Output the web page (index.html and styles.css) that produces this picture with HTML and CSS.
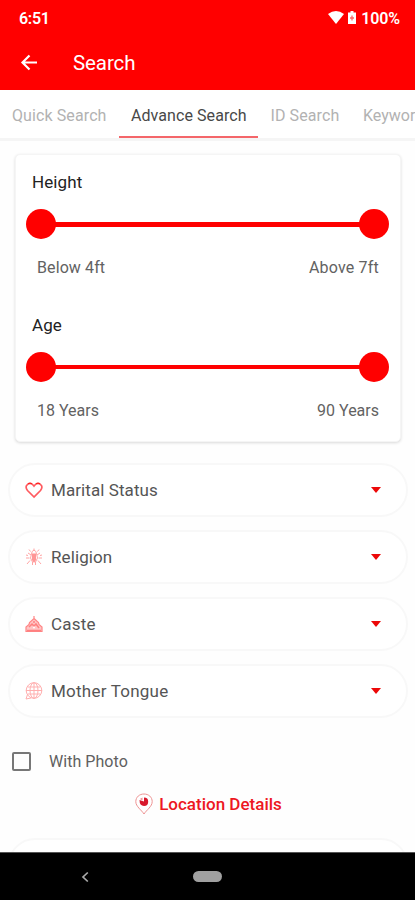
FILE: index.html
```html
<!DOCTYPE html>
<html lang="en">
<head>
<meta charset="utf-8">
<title>Search</title>
<link rel="stylesheet" href="styles.css">
</head>
<body>
<div class="screen">
  <header class="header">
    <div class="status">
      <span class="clock">6:51</span>
      <svg class="wifi" width="16" height="13" viewBox="0 0 16 13"><path d="M0 3Q8-3 16 3L8 13Z" fill="#fff"/></svg>
      <svg class="battery" width="8" height="13" viewBox="0 0 8 13"><path d="M2.5 0h3v1.5H8V13H0V1.5h2.500z" fill="#fff"/><path d="M4 4.500v5M2 7h4" stroke="#f66" stroke-width="1.300"/></svg>
      <span class="percent">100%</span>
    </div>
    <div class="toolbar">
      <svg class="back" width="18" height="18" viewBox="0 0 18 18"><path d="M17 8.500H2.500M9.500 1.500l-7 7 7 7" fill="none" stroke="#fff" stroke-width="2.200"/></svg>
      <h1 class="title">Search</h1>
    </div>
  </header>
  <nav class="tabs">
    <span class="tab tab-quick">Quick Search</span>
    <span class="tab tab-advance active">Advance Search</span>
    <span class="tab tab-id">ID Search</span>
    <span class="tab tab-keyword">Keyword Search</span>
  </nav>
  <main class="content">
    <section class="card">
      <div class="range">
        <h2 class="label">Height</h2>
        <div class="slider"><i class="knob"></i><i class="track"></i><i class="knob"></i></div>
        <div class="limits"><span class="below">Below 4ft</span><span class="above">Above 7ft</span></div>
      </div>
      <div class="range">
        <h2 class="label">Age</h2>
        <div class="slider"><i class="knob"></i><i class="track track-age"></i><i class="knob"></i></div>
        <div class="limits"><span>18 Years</span><span>90 Years</span></div>
      </div>
    </section>
    <div class="fields">
      <div class="field">
        <svg class="icon" width="18" height="18" viewBox="0 0 18 18"><path d="M9 16L2.500 9.500C-.5 6 2 2.500 5 2.500c2 0 3 1 4 2.500 1-1.500 2-2.500 4-2.500 3 0 5.500 3.500 2.500 7z" fill="none" stroke="#ff5a5f" stroke-width="1.700"/><path d="M3 2.800q2-1.500 4 0M11 2.800q2-1.500 4 0" fill="none" stroke="#f22" stroke-width="1.300"/></svg>
        <span class="name marital">Marital Status</span><i class="caret"></i>
      </div>
      <div class="field">
        <svg class="icon" width="18" height="18" viewBox="0 0 18 18"><g fill="none" stroke="#ffa5a5"><path d="M6 7L3 5M12 7l3-2M4.500 10H1M13.500 10H17M5 12.500L2 16M13 12.500l3 3.500M5.500 3.500L4 1.500M12.500 3.500L14 1.500M1 7l2 .5M17 7l-2 .5"/><path d="M6.500 6Q6.500 3 9 2q2.500 1 2.500 4l1 4-2 4v3M6.500 6l-1 4 2 4v3"/></g><path d="M7 5.500h4v6.500l-2 3-2-3z" fill="#ff9696"/><path d="M9 .5V3" stroke="#ffa5a5"/></svg>
        <span class="name religion">Religion</span><i class="caret"></i>
      </div>
      <div class="field">
        <svg class="icon" width="18" height="18" viewBox="0 0 18 18"><path d="M9 1v3M9 3.500l4.500 4 .5 2 3 2.500v4.500H1V12l3-2.500.5-2z" fill="#ffc5c5" stroke="#ff8585" stroke-width="1.200"/><path d="M2 15.500h14M4 12l3-3 2 2 2-2 3 4M8 7h2" fill="none" stroke="#ff8080" stroke-width="1.500"/><circle cx="9" cy="12.500" r="1" fill="#fff"/></svg>
        <span class="name caste">Caste</span><i class="caret"></i>
      </div>
      <div class="field">
        <svg class="icon" width="18" height="18" viewBox="0 0 18 18"><g fill="none" stroke="#ffafaf" stroke-width="1"><circle cx="9" cy="8.500" r="7.800"/><ellipse cx="9" cy="8.500" rx="4" ry="7.800"/><path d="M9 1v15.500M2.500 5h13M1 8.500h16M2.500 12h13M2.500 12.500L1 17l5-1"/></g></svg>
        <span class="name tongue">Mother Tongue</span><i class="caret"></i>
      </div>
    </div>
    <label class="photo"><i class="box"></i><span>With Photo</span></label>
    <div class="location">
      <svg width="18" height="22" viewBox="0 0 18 22"><path d="M9 21C6.500 17 .8 13.500.8 8.700.8 4 4.500 1 9 1s8.200 3 8.200 7.700C17.200 13.500 11.500 17 9 21z" fill="#fff" stroke="#ee9292"/><path d="M4.500 7L9 8.500V4.500q4.200 0 4.200 4.200t-4.200 4.200Q4.500 12.900 4.500 7z" fill="#d8182c"/><path d="M4.800 6L7.500 4.500v3z" fill="#f58b92"/></svg>
      <h2 class="location-title">Location Details</h2>
    </div>
    <div class="field next-field"></div>
  </main>
  <footer class="navbar">
    <svg class="nav-back" width="8" height="12" viewBox="0 0 8 12"><path d="M6.800 1.500L2 6l4.800 4.500" fill="none" stroke="#aaa" stroke-width="1.700"/></svg>
    <i class="home"></i>
  </footer>
</div>
</body>
</html>
```
FILE: styles.css
```css
* { box-sizing: border-box; }
body { margin: 0; background: #fefefe; font-family: Roboto, "Liberation Sans", sans-serif; }
h1, h2 { margin: 0; font-weight: 400; }
svg { display: block; flex: none; }
.screen { width: 415px; height: 900px; overflow: hidden; display: flex; flex-direction: column; }
.header { height: 90px; flex: none; background: #f00; color: #fff; }
.status { height: 36px; padding: 0 15px 0 19px; display: flex; align-items: center; font-size: 16px; font-weight: 500; }
.clock { flex: 1; font-weight: 600; letter-spacing: -.3px; }
.percent { font-weight: 600; letter-spacing: -.1px; }
.wifi { margin-right: 4px; margin-top: -2px; }
.battery { margin-right: 5px; margin-top: -2px; }
.toolbar { height: 53px; display: flex; align-items: center; padding-left: 20px; }
.back { margin-right: 35px; }
.title { font-size: 20.500px; letter-spacing: -.1px; }
.tabs { height: 51px; flex: none; display: flex; border-bottom: 3px solid #f5f5f5; white-space: nowrap; overflow: hidden; background: #fff; }
.tab { height: 49px; flex: none; padding-left: 12px; font-size: 16px; line-height: 52px; color: #b2b2b2; }
.tab-quick { width: 119px; letter-spacing: .1px; }
.tab-advance { width: 139px; letter-spacing: .07px; }
.tab-id { width: 93px; padding-left: 12.500px; letter-spacing: .1px; }
.active { color: #484848; border-bottom: 3px solid #f4666a; }
.content { flex: 1; min-height: 0; overflow: hidden; padding-top: 13px; }
.card { margin: 0 14px 0 15px; height: 288px; border-radius: 5px; background: #fff; border: 1px solid #f5f5f5; box-shadow: 0 1px 3px rgba(0,0,0,.15); padding: 16px 11px 0 10px; }
.range { height: 143px; }
.label { padding-left: 6px; height: 23px; line-height: 23px; font-size: 17px; letter-spacing: .1px; color: #222; }
.slider { height: 30px; margin-top: 15px; display: flex; align-items: center; }
.knob { width: 30px; height: 30px; border-radius: 50%; background: #f00; }
.track { flex: 1; height: 5px; margin: 0 -2px; background: #f00; }
.track-age { height: 4px; }
.limits { padding: 0 10px 0 11px; margin-top: 18px; display: flex; justify-content: space-between; font-size: 16px; line-height: 22px; color: #626262; }
.below { letter-spacing: .1px; }
.above { letter-spacing: .2px; }
.fields { margin: 21px 7px 0 8px; display: flex; flex-direction: column; gap: 13px; }
.field { height: 54px; border: 2px solid #f8f8f8; border-radius: 27px; display: flex; align-items: center; padding: 0 25px 0 15px; background: #fff; }
.icon { margin-right: 8px; }
.name { flex: 1; font-size: 17px; color: #555; }
.marital { letter-spacing: .08px; }
.religion { letter-spacing: .1px; }
.caste { letter-spacing: .2px; }
.tongue { letter-spacing: .23px; }
.caret { border: 5px solid transparent; border-top: 6px solid #ec0808; border-bottom: 0; }
.photo { height: 20px; margin: 33px 0 0 12px; display: flex; align-items: center; font-size: 16px; letter-spacing: .05px; color: #606060; }
.box { width: 19px; height: 19px; border: 2px solid #777; border-radius: 2px; margin-right: 18px; }
.location { height: 24px; margin-top: 21px; padding-left: 2px; display: flex; justify-content: center; align-items: center; gap: 6px; }
.location-title { font-size: 17px; font-weight: 500; color: #ed1722; }
.next-field { margin: 22px 7px 0 8px; }
.navbar { height: 48px; flex: none; background: #000; border-top: 1px solid #555; display: flex; align-items: center; }
.nav-back { margin-left: 81px; }
.home { width: 29px; height: 11px; border-radius: 6px; background: #a0a0a0; margin-left: 104px; }
```
